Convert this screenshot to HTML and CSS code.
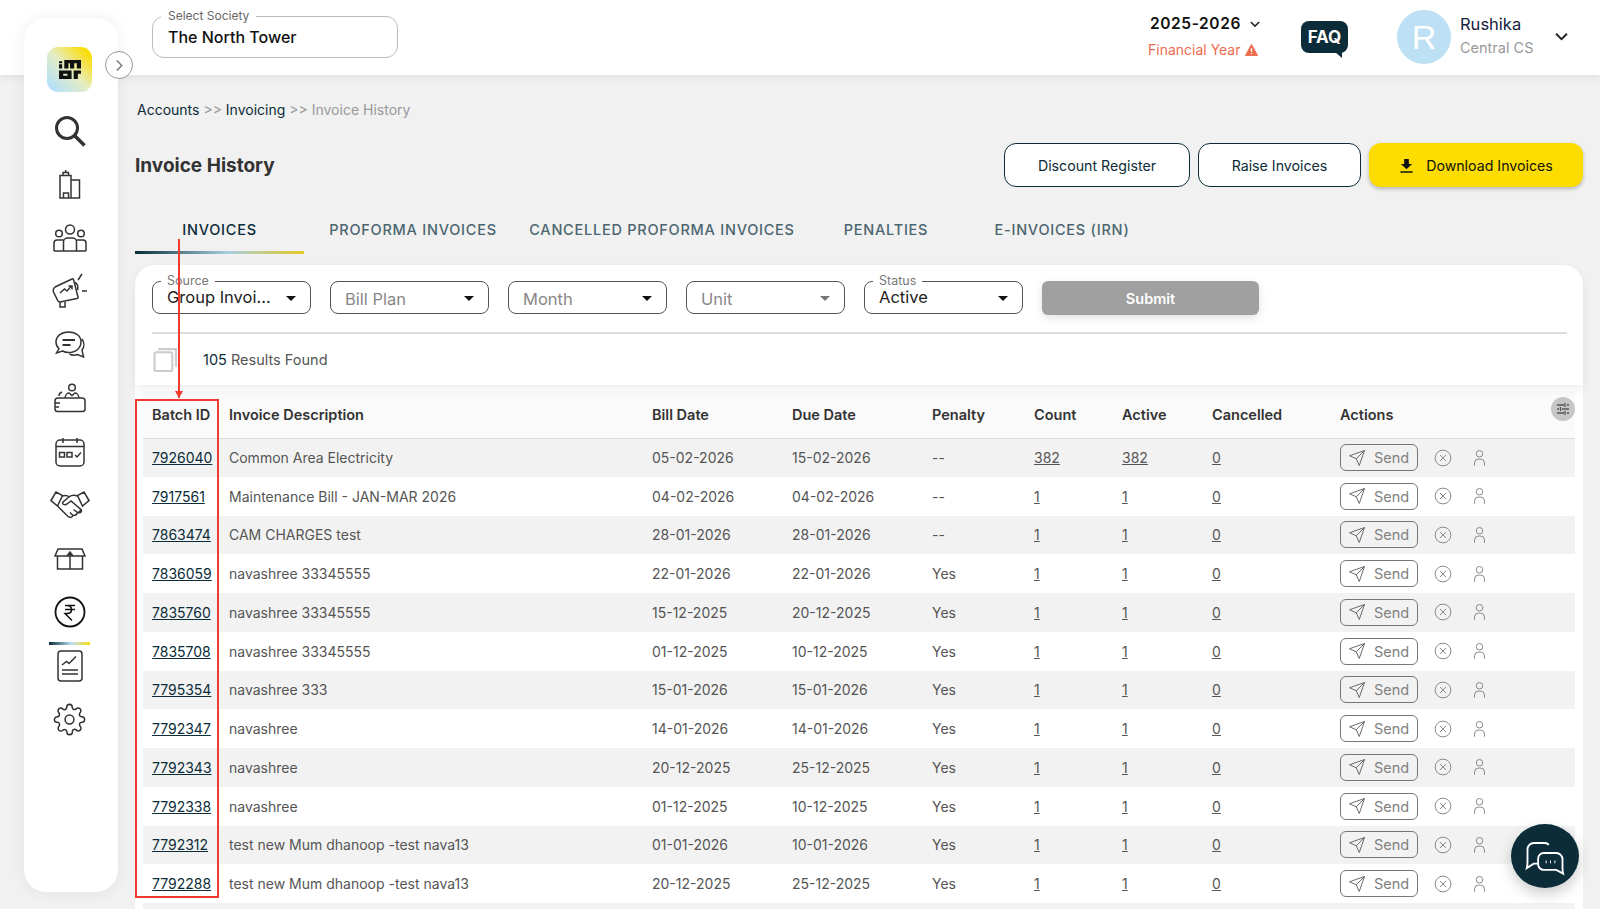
FILE: index.html
```html
<!DOCTYPE html>
<html lang="en">
<head>
    <meta charset="UTF-8">
    <meta name="viewport" content="width=device-width, initial-scale=1.0">
    <title>Invoice History</title>
    <link rel="stylesheet" href="styles.css">
</head>
<body>

<svg class="sprite" xmlns="http://www.w3.org/2000/svg">
    <symbol id="i-send" viewBox="0 0 24 24"><path d="M22 2 11 13M22 2l-7 20-4-9-9-4z"/></symbol>
    <symbol id="i-cancel" viewBox="0 0 24 24"><circle cx="12" cy="12" r="10.5"/><path d="M8 8l8 8M16 8l-8 8"/></symbol>
    <symbol id="i-user" viewBox="0 0 24 24"><circle cx="12" cy="6" r="4.6"/><path d="M5 23v-4a5.5 5.5 0 0 1 5.5-5.5h3a5.5 5.5 0 0 1 5.5 5.5v4"/></symbol>
</svg>

<div class="page">
    <header class="topbar">
        <div class="society">
            <span class="float-label">Select Society</span>
            <span class="society-name">The North Tower</span>
        </div>
        <div class="year">
            <div class="year-value">2025-2026
                <svg class="chev" viewBox="0 0 12 8"><path d="M1 1.5l5 5 5-5"/></svg>
            </div>
            <div class="year-label">Financial Year
                <svg class="warn" viewBox="0 0 14 13"><path d="M7 .5 13.6 12.5H.4z" fill="#ee6c4d" stroke="#ee6c4d" stroke-linejoin="round"/><path d="M7 4.5v4M7 9.7v1.2" stroke="#fff" stroke-width="1.5"/></svg>
            </div>
        </div>
        <div class="faq">FAQ</div>
        <div class="avatar">R</div>
        <div class="user">
            <div class="user-name">Rushika</div>
            <div class="user-role">Central CS</div>
        </div>
        <svg class="chev user-chev" viewBox="0 0 12 8"><path d="M1 1.5l5 5 5-5"/></svg>
    </header>

    <nav class="sidebar">
        <button class="collapse">
            <svg viewBox="0 0 10 14"><path d="M2 1.5 7.5 7 2 12.5"/></svg>
        </button>
        <div class="logo">
            <svg viewBox="0 0 22 20">
                <path d="M1 2h3v2H1zM1 5h3v4H1zM6 1h16v8h-4V4h-2.500v5h-4V4H10v5H6zM1 11h12v8H1zM5 14v2h4v-2zM15 11h7v3h-3v5h-4z" fill="#111" fill-rule="evenodd"/>
            </svg>
        </div>
        <div class="nav-item">
            <svg width="32" height="32" viewBox="0 0 32 32"><circle cx="13" cy="13" r="10.5" stroke-width="3"/><path d="M20.5 20.5 30.5 30.5" stroke-width="3.5"/></svg>
        </div>
        <div class="nav-item">
            <svg width="22" height="30" viewBox="0 0 22 30"><path d="M1 6.5h11V29H1zM12 11h8.500v18H12zM4.500 29v-5h5v5M4 6.500V3.500h5.500v3M6.700 3.500V1"/></svg>
        </div>
        <div class="nav-item">
            <svg width="34" height="28" viewBox="0 0 34 28"><circle cx="17" cy="5.500" r="4.500"/><circle cx="6" cy="9.500" r="3.300"/><circle cx="28" cy="9.500" r="3.300"/><path d="M10.500 27V18a4 4 0 0 1 4-4h5a4 4 0 0 1 4 4v9M1 27v-8a3 3 0 0 1 3-3h6.500M33 27v-8a3 3 0 0 0-3-3h-6.500M1 27h32"/></svg>
        </div>
        <div class="nav-item">
            <svg width="36" height="36" viewBox="0 0 36 36"><path d="M3 14 20 6q1-.5 1.500.5L26 24q.3 1.500-1 1.500L8 29q-1 0-2-1L1.500 19q-1-3 1.500-5zM8 28.500V34h5v-6.500M22 9q5 2 3.500 8M26 7l4-6M30 18h5M8 20l4.500-4 2.500 2 4-4.500M16.500 13H20v3.500"/></svg>
        </div>
        <div class="nav-item">
            <svg width="30" height="28" viewBox="0 0 30 28"><path d="M13.500 1C6 1 1 5.500 1 11c0 2.500 1 5 3 6.500L1.500 22l6-2c2 1 4 1.500 6 1.500 7.500 0 12.500-4.500 12.500-10.500S21 1 13.500 1zM27 8c2.500 3.500 2.500 8 0 11l1.500 7-6-2.500c-2.500 1-5.500 1-8-.5"/><path d="M7.500 9H20M7.500 14h8" stroke-width="2"/></svg>
        </div>
        <div class="nav-item">
            <svg width="32" height="30" viewBox="0 0 32 30"><circle cx="18" cy="4.500" r="3.300"/><path d="M11 15c.5-4 3-5 4-5l3 2.500 3-2.500c1 0 3.500 1 4 5M1 18q0-3 3-3h24q3 0 3 3v8q0 2.500-2.500 2.500h-25Q1 28.500 1 26zM1 20h5M1 24h4M5 13q0-3 3-4"/></svg>
        </div>
        <div class="nav-item">
            <svg width="30" height="30" viewBox="0 0 30 30"><rect x="1" y="3" width="28" height="26" rx="4"/><path d="M1 9.500h28M8 1v5M22 1v5M20 18l2 2 4-4.500"/><rect x="4.500" y="15.500" width="5" height="4.500"/><rect x="12" y="15.500" width="5" height="4.500"/></svg>
        </div>
        <div class="nav-item">
            <svg width="40" height="28" viewBox="0 0 40 28"><path d="M1 9.500 6 1l6.500 3.500-5 10.500zM39 9.500 34 1l-6.500 3.500 5 10.500zM12.500 5c3-1 5-.5 7 1M27.500 5c-3-1-6-1-8.500 1l-6 5c-1.500 2 1.500 3.500 4 2l4-3 10 8.500c1.500 2-1 4-3 3M7.500 15 18 25.500c2 1.500 4 1 5-1 2 0 4-1 4.500-3 2 0 3-1 3-3.500M20 21.500l3 3M23.500 18.500l4 3"/></svg>
        </div>
        <div class="nav-item">
            <svg width="32" height="22" viewBox="0 0 32 22"><path d="M3.500 8h25v13h-25zM16 5v16M1 8l3-7h24l3 7h-12l-3-4-3 4z"/></svg>
        </div>
        <div class="nav-item nav-item-active">
            <svg width="32" height="32" viewBox="0 0 32 32"><circle cx="16" cy="16" r="14.500" stroke="#111" stroke-width="1.800"/><path d="M11 9.500h10M11 13.500h10M13 9.500c6 0 6 8 0 8h-2l7 7" stroke="#111"/></svg>
        </div>
        <div class="nav-item">
            <svg width="26" height="32" viewBox="0 0 26 32"><rect x="1" y="1" width="24" height="30" rx="3"/><path d="M5 15l4.500-3.500 2.500 2 7-7M5 20h16M5 24h16"/></svg>
        </div>
        <div class="nav-item">
            <svg width="33" height="33" viewBox="0 0 24 24" class="gear"><circle cx="12" cy="12" r="3.200"/><path d="M19.400 15a1.650 1.650 0 0 0 .33 1.820l.06.06a2 2 0 0 1 0 2.830 2 2 0 0 1-2.830 0l-.06-.06a1.650 1.650 0 0 0-1.820-.33 1.650 1.650 0 0 0-1 1.510V21a2 2 0 0 1-2 2 2 2 0 0 1-2-2v-.09A1.650 1.650 0 0 0 9 19.400a1.650 1.650 0 0 0-1.820.33l-.06.06a2 2 0 0 1-2.830 0 2 2 0 0 1 0-2.830l.06-.06a1.650 1.650 0 0 0 .33-1.820 1.650 1.650 0 0 0-1.510-1H3a2 2 0 0 1-2-2 2 2 0 0 1 2-2h.09A1.650 1.650 0 0 0 4.600 9a1.650 1.650 0 0 0-.33-1.820l-.06-.06a2 2 0 0 1 0-2.830 2 2 0 0 1 2.830 0l.06.06a1.650 1.650 0 0 0 1.820.33H9a1.650 1.650 0 0 0 1-1.510V3a2 2 0 0 1 2-2 2 2 0 0 1 2 2v.09a1.650 1.650 0 0 0 1 1.510 1.650 1.650 0 0 0 1.820-.33l.06-.06a2 2 0 0 1 2.830 0 2 2 0 0 1 0 2.830l-.06.06a1.650 1.650 0 0 0-.33 1.820V9a1.650 1.650 0 0 0 1.510 1H21a2 2 0 0 1 2 2 2 2 0 0 1-2 2h-.09a1.650 1.650 0 0 0-1.510 1z"/></svg>
        </div>
    </nav>

    <main class="content">
        <div class="crumbs"><b>Accounts</b> &gt;&gt; <b>Invoicing</b> &gt;&gt; Invoice History</div>

        <div class="title-row">
            <h1>Invoice History</h1>
            <div class="title-actions">
                <button class="btn btn-register">Discount Register</button>
                <button class="btn btn-raise">Raise Invoices</button>
                <button class="btn btn-yellow">
                    <svg viewBox="0 0 16 16"><path d="M5.500 1h5v5.500H14L8 12 2 6.500h3.500zM1.500 14h13v1.700h-13z" fill="#111"/></svg>
                    Download Invoices
                </button>
            </div>
        </div>

        <div class="tabs">
            <div class="tab tab-active tab-1">INVOICES</div>
            <div class="tab tab-2">PROFORMA INVOICES</div>
            <div class="tab tab-3">CANCELLED PROFORMA INVOICES</div>
            <div class="tab tab-4">PENALTIES</div>
            <div class="tab tab-5">E-INVOICES (IRN)</div>
        </div>

        <section class="filters">
            <div class="filter-row">
                <div class="field">
                    <span class="field-label">Source</span>
                    <span class="field-value">Group Invoi...</span>
                    <i class="caret"></i>
                </div>
                <div class="field is-empty"><span class="field-value">Bill Plan</span><i class="caret"></i></div>
                <div class="field is-empty"><span class="field-value">Month</span><i class="caret"></i></div>
                <div class="field is-empty"><span class="field-value">Unit</span><i class="caret caret-grey"></i></div>
                <div class="field">
                    <span class="field-label">Status</span>
                    <span class="field-value">Active</span>
                    <i class="caret"></i>
                </div>
                <button class="submit">Submit</button>
            </div>
            <div class="results">
                <svg class="copy" viewBox="0 0 24 24"><rect x="1.500" y="5" width="17" height="18" rx="1.500"/><path d="M5 2h17v17"/></svg>
                <span class="results-text"><em>105</em> Results Found</span>
            </div>
        </section>

        <section class="table-wrap">
            <button class="tune">
                <svg viewBox="0 0 16 16"><path d="M2 4h7M12 4h2M2 8h2M7 8h7M2 12h7M12 12h2M10 2v4M5.500 6v4M10 10v4"/></svg>
            </button>
            <table class="grid">
                <colgroup>
                    <col class="c-batch"><col class="c-desc"><col class="c-date"><col class="c-date"><col class="c-penalty"><col class="c-count"><col class="c-active"><col class="c-cancel"><col>
                </colgroup>
                <thead>
                    <tr><th>Batch ID</th><th>Invoice Description</th><th>Bill Date</th><th>Due Date</th><th>Penalty</th><th>Count</th><th>Active</th><th>Cancelled</th><th>Actions</th></tr>
                </thead>
                <tbody>
                    <tr>
                        <td><a class="batch">7926040</a></td><td>Common Area Electricity</td><td>05-02-2026</td><td>15-02-2026</td><td>--</td><td><a>382</a></td><td><a>382</a></td><td><a>0</a></td>
                        <td><div class="acts"><span class="send"><svg><use href="#i-send"/></svg>Send</span><svg class="act-x"><use href="#i-cancel"/></svg><svg class="act-u"><use href="#i-user"/></svg></div></td>
                    </tr>
                    <tr>
                        <td><a class="batch">7917561</a></td><td>Maintenance Bill - JAN-MAR 2026</td><td>04-02-2026</td><td>04-02-2026</td><td>--</td><td><a>1</a></td><td><a>1</a></td><td><a>0</a></td>
                        <td><div class="acts"><span class="send"><svg><use href="#i-send"/></svg>Send</span><svg class="act-x"><use href="#i-cancel"/></svg><svg class="act-u"><use href="#i-user"/></svg></div></td>
                    </tr>
                    <tr>
                        <td><a class="batch">7863474</a></td><td>CAM CHARGES test</td><td>28-01-2026</td><td>28-01-2026</td><td>--</td><td><a>1</a></td><td><a>1</a></td><td><a>0</a></td>
                        <td><div class="acts"><span class="send"><svg><use href="#i-send"/></svg>Send</span><svg class="act-x"><use href="#i-cancel"/></svg><svg class="act-u"><use href="#i-user"/></svg></div></td>
                    </tr>
                    <tr>
                        <td><a class="batch">7836059</a></td><td>navashree 33345555</td><td>22-01-2026</td><td>22-01-2026</td><td>Yes</td><td><a>1</a></td><td><a>1</a></td><td><a>0</a></td>
                        <td><div class="acts"><span class="send"><svg><use href="#i-send"/></svg>Send</span><svg class="act-x"><use href="#i-cancel"/></svg><svg class="act-u"><use href="#i-user"/></svg></div></td>
                    </tr>
                    <tr>
                        <td><a class="batch">7835760</a></td><td>navashree 33345555</td><td>15-12-2025</td><td>20-12-2025</td><td>Yes</td><td><a>1</a></td><td><a>1</a></td><td><a>0</a></td>
                        <td><div class="acts"><span class="send"><svg><use href="#i-send"/></svg>Send</span><svg class="act-x"><use href="#i-cancel"/></svg><svg class="act-u"><use href="#i-user"/></svg></div></td>
                    </tr>
                    <tr>
                        <td><a class="batch">7835708</a></td><td>navashree 33345555</td><td>01-12-2025</td><td>10-12-2025</td><td>Yes</td><td><a>1</a></td><td><a>1</a></td><td><a>0</a></td>
                        <td><div class="acts"><span class="send"><svg><use href="#i-send"/></svg>Send</span><svg class="act-x"><use href="#i-cancel"/></svg><svg class="act-u"><use href="#i-user"/></svg></div></td>
                    </tr>
                    <tr>
                        <td><a class="batch">7795354</a></td><td>navashree 333</td><td>15-01-2026</td><td>15-01-2026</td><td>Yes</td><td><a>1</a></td><td><a>1</a></td><td><a>0</a></td>
                        <td><div class="acts"><span class="send"><svg><use href="#i-send"/></svg>Send</span><svg class="act-x"><use href="#i-cancel"/></svg><svg class="act-u"><use href="#i-user"/></svg></div></td>
                    </tr>
                    <tr>
                        <td><a class="batch">7792347</a></td><td>navashree</td><td>14-01-2026</td><td>14-01-2026</td><td>Yes</td><td><a>1</a></td><td><a>1</a></td><td><a>0</a></td>
                        <td><div class="acts"><span class="send"><svg><use href="#i-send"/></svg>Send</span><svg class="act-x"><use href="#i-cancel"/></svg><svg class="act-u"><use href="#i-user"/></svg></div></td>
                    </tr>
                    <tr>
                        <td><a class="batch">7792343</a></td><td>navashree</td><td>20-12-2025</td><td>25-12-2025</td><td>Yes</td><td><a>1</a></td><td><a>1</a></td><td><a>0</a></td>
                        <td><div class="acts"><span class="send"><svg><use href="#i-send"/></svg>Send</span><svg class="act-x"><use href="#i-cancel"/></svg><svg class="act-u"><use href="#i-user"/></svg></div></td>
                    </tr>
                    <tr>
                        <td><a class="batch">7792338</a></td><td>navashree</td><td>01-12-2025</td><td>10-12-2025</td><td>Yes</td><td><a>1</a></td><td><a>1</a></td><td><a>0</a></td>
                        <td><div class="acts"><span class="send"><svg><use href="#i-send"/></svg>Send</span><svg class="act-x"><use href="#i-cancel"/></svg><svg class="act-u"><use href="#i-user"/></svg></div></td>
                    </tr>
                    <tr>
                        <td><a class="batch">7792312</a></td><td>test new Mum dhanoop -test nava13</td><td>01-01-2026</td><td>10-01-2026</td><td>Yes</td><td><a>1</a></td><td><a>1</a></td><td><a>0</a></td>
                        <td><div class="acts"><span class="send"><svg><use href="#i-send"/></svg>Send</span><svg class="act-x"><use href="#i-cancel"/></svg><svg class="act-u"><use href="#i-user"/></svg></div></td>
                    </tr>
                    <tr>
                        <td><a class="batch">7792288</a></td><td>test new Mum dhanoop -test nava13</td><td>20-12-2025</td><td>25-12-2025</td><td>Yes</td><td><a>1</a></td><td><a>1</a></td><td><a>0</a></td>
                        <td><div class="acts"><span class="send"><svg><use href="#i-send"/></svg>Send</span><svg class="act-x"><use href="#i-cancel"/></svg><svg class="act-u"><use href="#i-user"/></svg></div></td>
                    </tr>
                    <tr><td colspan="9"></td></tr>
                </tbody>
            </table>
        </section>
    </main>

    <div class="mark-line"></div>
    <div class="mark-box"></div>

    <button class="chat-fab">
        <svg viewBox="0 0 32 32"><path d="M19 5.500A4 4 0 0 0 16 4H7a5 5 0 0 0-5 5v9.500c0 1 0 4-.5 5.500l5.500-3.500h4"/><path d="M15 12h10a5 5 0 0 1 5 5v6.500c0 1 0 3 .5 5L25 25.500H15a4.500 4.500 0 0 1-4.500-4.500v-4.500A4.500 4.500 0 0 1 15 12z"/><path d="M16.500 19h.8M20 19h.8M23.500 19h.8" stroke-width="2.200"/></svg>
    </button>
</div>

</body>
</html>
```

FILE: styles.css
```css
* {
    box-sizing: border-box;
}
html, body {
    margin: 0;
    height: 100%;
    overflow: hidden;
}
body {
    font-family: Inter, "Liberation Sans", sans-serif;
    font-size: 14px;
    color: #0b2c38;
    background-color: #f1f1f1;
}
button {
    font-family: inherit;
}
.sprite {
    display: none;
}
.page {
    position: relative;
    display: grid;
    grid-template-columns: 135px 1fr;
    grid-template-rows: 75px 1fr;
    height: 909px;
}

/* top bar */
.topbar {
    grid-column: 1 / 3;
    grid-row: 1;
    display: flex;
    align-items: center;
    padding-left: 152px;
    background-color: white;
    box-shadow: 0 2px 8px rgba(0, 0, 0, 0.08);
}
.society {
    position: relative;
    width: 246px;
    height: 42px;
    margin-top: -2px;
    padding: 10px 15px;
    border: 1px solid #bbb;
    border-radius: 12px;
}
.float-label {
    position: absolute;
    left: 8px;
    top: -8px;
    padding: 0 7px;
    font-size: 12px;
    line-height: 14px;
    color: #666;
    background-color: white;
}
.society-name {
    font-size: 16px;
    font-weight: 500;
    color: #111;
}
.year {
    width: 112px;
    margin-left: 750px;
    margin-top: -3px;
}
.year-value {
    display: flex;
    align-items: center;
    gap: 9px;
    margin-left: 2px;
    font-size: 15.5px;
    font-weight: 600;
    letter-spacing: 0.6px;
    white-space: nowrap;
    color: #111;
}
.year-label {
    display: flex;
    align-items: center;
    gap: 4px;
    margin-top: 8px;
    font-size: 14px;
    white-space: nowrap;
    color: #ee6c4d;
}
.chev {
    width: 11px;
    height: 8px;
    fill: none;
    stroke: #222;
    stroke-width: 1.8;
}
.warn {
    width: 13px;
    height: 12px;
}
.faq {
    position: relative;
    width: 47px;
    height: 32px;
    margin-left: 41px;
    margin-top: -2px;
    font-size: 17px;
    font-weight: 700;
    line-height: 32px;
    text-align: center;
    color: white;
    background-color: #0b2c38;
    border-radius: 8px;
}
.faq::after {
    content: "";
    position: absolute;
    right: 6px;
    bottom: -5px;
    border-top: 6px solid #0b2c38;
    border-left: 7px solid transparent;
}
.avatar {
    width: 54px;
    height: 54px;
    margin-left: 49px;
    margin-top: -1px;
    font-family: "Liberation Sans", sans-serif;
    font-size: 34px;
    line-height: 54px;
    text-align: center;
    color: white;
    background-color: #bde0f4;
    border-radius: 50%;
}
.user {
    width: 95px;
    margin-left: 9px;
    margin-top: -6px;
}
.user-name {
    font-size: 16.5px;
    color: #14213d;
}
.user-role {
    margin-top: 5px;
    font-size: 14.5px;
    color: #999;
}
.user-chev {
    width: 13px;
    height: 9px;
    margin-top: -2px;
}

/* sidebar */
.sidebar {
    grid-column: 1;
    grid-row: 1 / 3;
    z-index: 2;
    position: relative;
    display: flex;
    flex-direction: column;
    align-items: center;
    width: 94px;
    height: 874px;
    margin: 18px 0 0 24px;
    padding: 29px 3px 0 0;
    background-color: white;
    border-radius: 22px;
    box-shadow: 0 0 16px rgba(0, 0, 0, 0.07);
}
.collapse {
    position: absolute;
    left: 81px;
    top: 33px;
    width: 28px;
    height: 28px;
    padding: 0;
    background-color: white;
    border: 1px solid #999;
    border-radius: 50%;
}
.collapse svg {
    display: block;
    width: 9px;
    height: 13px;
    margin: 0 auto;
    fill: none;
    stroke: #777;
    stroke-width: 1.6;
}
.logo {
    width: 45px;
    height: 45px;
    margin-bottom: 12px;
    padding: 12px 11px;
    background: linear-gradient(45deg, #b5e1fa 10%, #e6ecc0 50%, #fbdd0a 88%);
    border-radius: 11px;
}
.logo svg {
    display: block;
    width: 23px;
    height: 21px;
}
.nav-item {
    display: flex;
    align-items: center;
    justify-content: center;
    flex: none;
    height: 53.5px;
    width: 100%;
}
.nav-item svg {
    fill: none;
    stroke: #333;
    stroke-width: 1.5;
}
.nav-item svg.gear {
    stroke-width: 1.1;
}
.nav-item-active {
    position: relative;
}
.nav-item-active::after {
    content: "";
    position: absolute;
    left: 25px;
    bottom: -6px;
    width: 41px;
    height: 3px;
    background: linear-gradient(90deg, #0b2c38, #bde0f4 55%, #fbdd0a);
}

/* main */
.content {
    grid-column: 2;
    grid-row: 2;
    display: flex;
    flex-direction: column;
    min-height: 0;
    padding-right: 17px;
}
.crumbs {
    margin-top: 26px;
    padding-left: 2px;
    height: 18px;
    line-height: 18px;
    color: #999;
}
.crumbs b {
    font-weight: 400;
    color: #0b2c38;
}
.title-row {
    display: flex;
    align-items: center;
    justify-content: space-between;
    margin-top: 24px;
    height: 44px;
}
h1 {
    margin: 0;
    font-size: 19px;
    font-weight: 700;
    color: #333;
}
.title-actions {
    display: flex;
    gap: 8px;
}
.btn {
    height: 44px;
    font-size: 14.2px;
    color: #0b2c38;
    background-color: white;
    border: 1.5px solid #0b2c38;
    border-radius: 12px;
}
.btn-register {
    width: 186px;
}
.btn-raise {
    width: 163px;
}
.btn-yellow {
    display: flex;
    align-items: center;
    justify-content: center;
    gap: 12px;
    width: 214px;
    color: #111;
    background-color: #fddd00;
    border: none;
    box-shadow: 0 2px 4px rgba(0, 0, 0, 0.25);
}
.btn-yellow svg {
    width: 15px;
    height: 15px;
}
.tabs {
    display: flex;
    margin-top: 25px;
}
.tab {
    height: 42px;
    padding-top: 9px;
    font-size: 14.5px;
    font-weight: 500;
    letter-spacing: 0.75px;
    text-align: center;
    color: #4c6670;
}
.tab-active {
    color: #0b2c38;
    background: linear-gradient(90deg, #0b2c38, #a9cfe0 55%, #e2c922) bottom / 100% 3px no-repeat;
}
.tab-1 { width: 169px; }
.tab-2 { width: 218px; }
.tab-3 { width: 280px; }
.tab-4 { width: 168px; }
.tab-5 { width: 184px; }

/* filters */
.filters {
    position: relative;
    z-index: 1;
    height: 120px;
    margin-top: 11px;
    padding: 16px 16px 0 17px;
    background-color: white;
    border-radius: 20px 20px 0 0;
    box-shadow: 0 4px 10px rgba(0, 0, 0, 0.07);
}
.filter-row {
    display: flex;
    gap: 19px;
    height: 53px;
    border-bottom: 2px solid #ddd;
}
.field {
    position: relative;
    width: 159px;
    height: 33px;
    padding: 0 14px;
    border: 1px solid #555;
    border-radius: 8px;
}
.field-label {
    position: absolute;
    left: 8px;
    top: -8px;
    padding: 0 6px;
    font-size: 12.5px;
    line-height: 14px;
    color: #777;
    background-color: white;
}
.field-value {
    display: block;
    font-size: 16.5px;
    line-height: 30px;
    color: #222;
}
.is-empty .field-value {
    line-height: 34px;
    color: #888;
}
.caret {
    position: absolute;
    right: 14px;
    top: 14px;
    border-top: 5px solid #111;
    border-left: 5px solid transparent;
    border-right: 5px solid transparent;
}
.caret-grey {
    border-top-color: #777;
}
.submit {
    width: 217px;
    height: 34px;
    font-size: 14.5px;
    font-weight: 600;
    color: white;
    background-color: #a0a0a0;
    border: none;
    border-radius: 6px;
    box-shadow: 0 3px 8px rgba(0, 0, 0, 0.12);
}
.results {
    display: flex;
    align-items: center;
    height: 50px;
}
.copy {
    width: 25px;
    height: 25px;
    margin-left: 1px;
    fill: none;
    stroke: #ccc;
    stroke-width: 2;
}
.results-text {
    margin-left: 25px;
    font-size: 14.5px;
    color: #555;
}
.results-text em {
    font-style: normal;
    color: #0b2c38;
}

/* table */
.table-wrap {
    position: relative;
    flex: 1;
    min-height: 0;
    overflow: hidden;
    padding: 6px 8px 0;
    background-color: white;
}
.tune {
    position: absolute;
    right: 8px;
    top: 12px;
    width: 24px;
    height: 24px;
    padding: 4px;
    background-color: #c6c6c6;
    border: none;
    border-radius: 50%;
}
.tune svg {
    display: block;
    fill: none;
    stroke: #555;
    stroke-width: 1.3;
}
.grid {
    width: 100%;
    border-collapse: collapse;
    table-layout: fixed;
}
.c-batch { width: 77px; }
.c-desc { width: 423px; }
.c-date { width: 140px; }
.c-penalty { width: 102px; }
.c-count { width: 88px; }
.c-active { width: 90px; }
.c-cancel { width: 128px; }
.grid th {
    height: 47px;
    padding: 0 0 0 9px;
    font-size: 14.5px;
    font-weight: 600;
    text-align: left;
    color: #333;
    background-color: #fafafa;
    border-bottom: 1px solid #ddd;
}
.grid td {
    height: 38.75px;
    padding: 0 0 0 9px;
    white-space: nowrap;
    color: #555;
}
.grid tbody tr:nth-child(odd) {
    background-color: #f2f2f2;
}
.grid a {
    color: #555;
    text-decoration: underline;
}
.grid a.batch {
    color: #0b2c38;
}
.acts {
    display: flex;
    align-items: center;
}
.send {
    display: flex;
    align-items: center;
    gap: 8px;
    width: 78px;
    height: 27px;
    padding-left: 7px;
    font-size: 14.5px;
    color: #808080;
    border: 1px solid #777;
    border-radius: 6px;
}
.send svg {
    width: 18px;
    height: 18px;
    fill: none;
    stroke: #666;
    stroke-width: 1.3;
}
.act-x {
    width: 18px;
    height: 18px;
    margin-left: 16px;
    fill: none;
    stroke: #888;
    stroke-width: 1.3;
}
.act-u {
    width: 17px;
    height: 18px;
    margin-left: 19px;
    fill: none;
    stroke: #808080;
    stroke-width: 1.3;
}

/* red annotation drawn over the shot */
.mark-box {
    position: absolute;
    left: 135px;
    top: 399px;
    width: 84px;
    height: 499px;
    border: 2px solid #f23b30;
    z-index: 3;
}
.mark-line {
    position: absolute;
    left: 178px;
    top: 239px;
    width: 2px;
    height: 159px;
    background-color: #f23b30;
    z-index: 3;
}
.mark-line::after {
    content: "";
    position: absolute;
    left: -3px;
    bottom: 0;
    border-top: 7px solid #f23b30;
    border-left: 4px solid transparent;
    border-right: 4px solid transparent;
}
.chat-fab {
    position: absolute;
    left: 1511px;
    top: 824px;
    width: 68px;
    height: 64px;
    padding: 14px;
    background-color: #0b2c38;
    border: none;
    border-radius: 50%;
    box-shadow: 0 6px 14px rgba(0, 0, 0, 0.2);
    z-index: 3;
}
.chat-fab svg {
    display: block;
    fill: none;
    stroke: white;
    stroke-width: 1.5;
}
```
